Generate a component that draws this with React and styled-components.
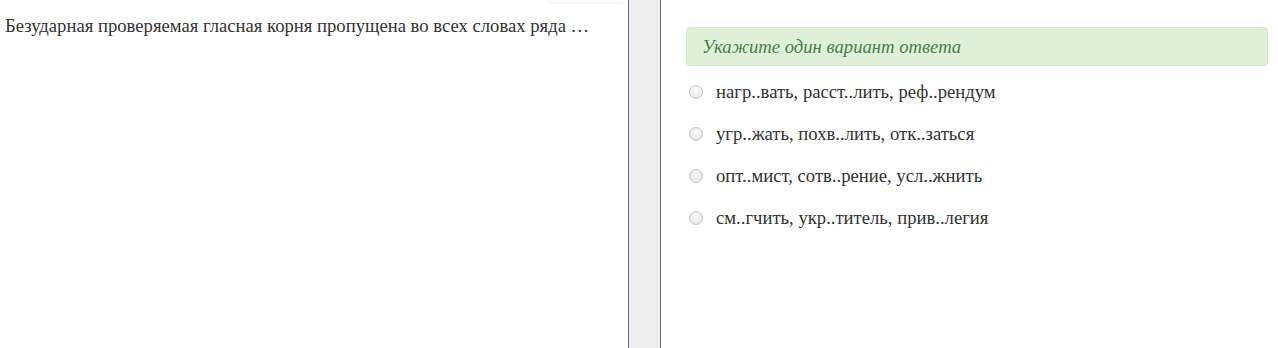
import React from "react";
import styled, { createGlobalStyle } from "styled-components";

const Global = createGlobalStyle`
  html, body { margin: 0; padding: 0; background: #fff; }
  body { font-family: "Liberation Serif", "Times New Roman", serif; color: #333; }
`;

const Page = styled.div`
  display: flex;
  height: 348px;
  overflow: hidden;
`;

const LeftPanel = styled.div`
  width: 628px;
  flex: none;
  position: relative;
  padding: 14px 0 0 5px;
  box-sizing: border-box;
`;

const TopShadow = styled.div`
  position: absolute;
  top: -10px;
  left: 548px;
  width: 78px;
  height: 12px;
  border-radius: 4px;
  box-shadow: 0 1px 3px rgba(0, 0, 0, 0.08);
  background: #fff;
`;

const Question = styled.p`
  margin: 0;
  font-family: "Liberation Serif", "Times New Roman", serif;
  font-size: 18.67px;
  line-height: 24px;
  color: #333;
`;

const Divider = styled.div`
  width: 31px;
  flex: none;
  background: #eeeeee;
  border-left: 1px solid #646a98;
  border-right: 1px solid #646a98;
`;

const RightPanel = styled.div`
  flex: 1;
  padding: 27px 10px 0 25px;
  box-sizing: border-box;
`;

const Alert = styled.div`
  height: 39px;
  box-sizing: border-box;
  background: #dff0d8;
  border: 1px solid #d6e9c6;
  border-radius: 4px;
  color: #4a7f4a;
  font-family: "Liberation Serif", "Times New Roman", serif;
  font-style: italic;
  font-size: 18.67px;
  display: flex;
  align-items: center;
  padding: 0 15px;
`;

const Options = styled.div`
  display: flex;
  flex-direction: column;
  margin-top: 5px;
`;

const Option = styled.label`
  display: flex;
  align-items: center;
  height: 42px;
  font-family: "Liberation Serif", "Times New Roman", serif;
  font-size: 18.67px;
  color: #333;
`;

const Radio = styled.span`
  width: 12px;
  height: 12px;
  border-radius: 50%;
  border: 1px solid #c4c4c4;
  background: radial-gradient(circle at 50% 40%, #fafafa 0%, #ececec 60%, #dcdcdc 100%);
  margin: 0 13px 0 3px;
  flex: none;
`;

const options = [
  "нагр..вать, расст..лить, реф..рендум",
  "угр..жать, похв..лить, отк..заться",
  "опт..мист, сотв..рение, усл..жнить",
  "см..гчить, укр..титель, прив..легия",
];

export default function App() {
  return (
    <>
      <Global />
      <Page>
        <LeftPanel>
          <TopShadow />
          <Question>Безударная проверяемая гласная корня пропущена во всех словах ряда …</Question>
        </LeftPanel>
        <Divider />
        <RightPanel>
          <Alert>Укажите один вариант ответа</Alert>
          <Options>
            {options.map((o) => (
              <Option key={o}>
                <Radio />
                {o}
              </Option>
            ))}
          </Options>
        </RightPanel>
      </Page>
    </>
  );
}
